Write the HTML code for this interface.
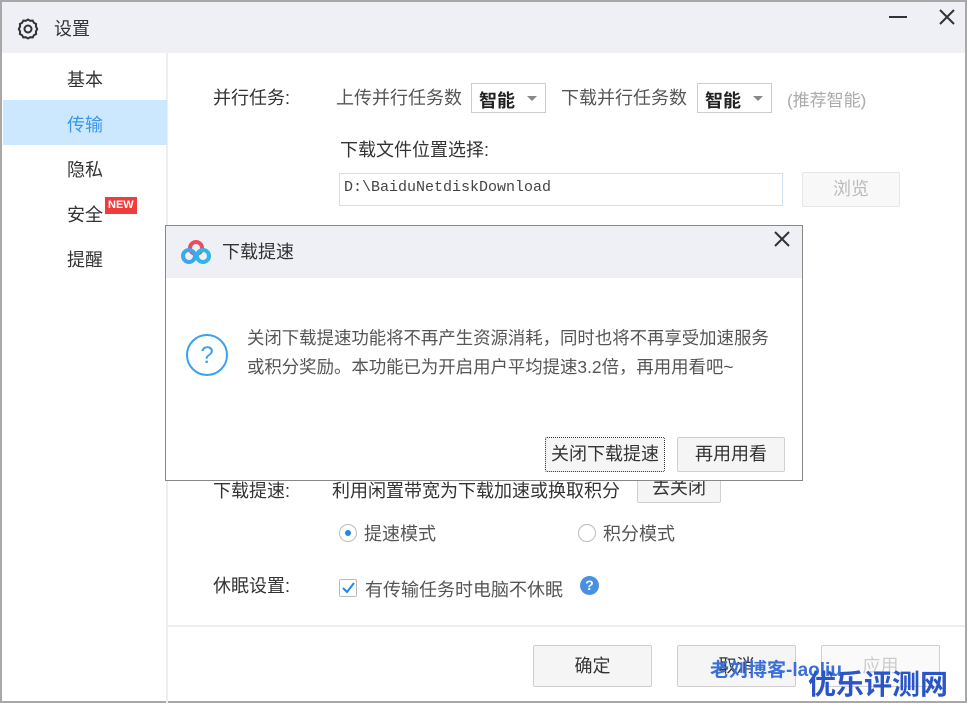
<!DOCTYPE html>
<html><head><meta charset="utf-8"><style>
*{margin:0;padding:0;box-sizing:border-box}
body{width:969px;height:707px;background:#fff;position:relative;overflow:hidden;font-family:"Liberation Sans","Microsoft YaHei","Noto Sans CJK SC",sans-serif;font-size:18px;color:#333}
.a{position:absolute;white-space:nowrap}
.btn{position:absolute;border:1px solid #d0d0d0;background:#f5f5f5;border-radius:2px;text-align:center;color:#333}
</style></head><body>
<div class="a" style="left:0;top:0;width:967px;height:703px;border:2px solid #a8a8a8"></div>
<div class="a" style="left:2px;top:2px;width:963px;height:51px;background:#eef0f5"></div>
<svg class="a" style="left:16px;top:17px" width="24" height="24" viewBox="0 0 24 24"><path d="M12 2.5l2.2 1.3 2.5-.2 1.2 2.2 2.2 1.2-.2 2.5 1.3 2.5-1.3 2.5.2 2.5-2.2 1.2-1.2 2.2-2.5-.2L12 21.5l-2.2-1.3-2.5.2-1.2-2.2-2.2-1.2.2-2.5L2.8 12l1.3-2.5-.2-2.5 2.2-1.2 1.2-2.2 2.5.2z" fill="none" stroke="#333" stroke-width="2"/><circle cx="12" cy="12" r="3.5" fill="none" stroke="#333" stroke-width="2"/></svg>
<div class="a" style="left:54px;top:15px;font-size:18px">设置</div>
<div class="a" style="left:889px;top:16px;width:18px;height:2px;background:#333"></div>
<svg class="a" style="left:937px;top:7px" width="20" height="20"><path d="M3 3L17 17M17 3L3 17" stroke="#333" stroke-width="2"/></svg>
<div class="a" style="left:166px;top:53px;width:2px;height:650px;background:#eee"></div>
<div class="a" style="left:3px;top:100px;width:164px;height:45px;background:#cce8ff"></div>
<div class="a" style="left:67px;top:66px">基本</div>
<div class="a" style="left:67px;top:111px;color:#3a96ee">传输</div>
<div class="a" style="left:67px;top:156px">隐私</div>
<div class="a" style="left:67px;top:201px">安全</div>
<div class="a" style="left:105px;top:197px;background:#f03c3c;color:#fff;font-size:11px;font-weight:bold;padding:1px 3px;line-height:15px">NEW</div>
<div class="a" style="left:67px;top:246px">提醒</div>
<div class="a" style="left:213px;top:84px">并行任务:</div>
<div class="a" style="left:336px;top:84px;color:#555">上传并行任务数</div>
<div class="a" style="left:471px;top:83px;width:75px;height:30px;border:1px solid #ccc;padding:3px 0 0 7px;color:#222;font-weight:bold">智能<span style="position:absolute;left:55px;top:12px;border:5px solid transparent;border-top:5px solid #888"></span></div>
<div class="a" style="left:561px;top:84px;color:#555">下载并行任务数</div>
<div class="a" style="left:697px;top:83px;width:75px;height:30px;border:1px solid #ccc;padding:3px 0 0 7px;color:#222;font-weight:bold">智能<span style="position:absolute;left:55px;top:12px;border:5px solid transparent;border-top:5px solid #888"></span></div>
<div class="a" style="left:787px;top:86px;color:#aaa;font-size:17px">(推荐智能)</div>
<div class="a" style="left:340px;top:136px">下载文件位置选择:</div>
<div class="a" style="left:339px;top:173px;width:444px;height:33px;border:1px solid #cfe0f0;padding:5px 0 0 4px;font-family:'Liberation Mono',monospace;font-size:15px;color:#444">D:\BaiduNetdiskDownload</div>
<div class="btn" style="left:802px;top:172px;width:98px;height:35px;line-height:33px;color:#bbb;background:#f8f8f8;border-color:#e6e6e6">浏览</div>
<div class="a" style="left:213px;top:477px">下载提速:</div>
<div class="a" style="left:332px;top:477px">利用闲置带宽为下载加速或换取积分</div>
<div class="btn" style="left:637px;top:474px;width:84px;height:29px;line-height:27px">去关闭</div>
<div class="a" style="left:339px;top:524px;width:18px;height:18px;border:1px solid #bbb;border-radius:50%"><div style="position:absolute;left:5px;top:5px;width:6px;height:6px;border-radius:50%;background:#1e88e5"></div></div>
<div class="a" style="left:364px;top:520px;color:#555">提速模式</div>
<div class="a" style="left:578px;top:524px;width:18px;height:18px;border:1px solid #bbb;border-radius:50%"></div>
<div class="a" style="left:603px;top:520px;color:#555">积分模式</div>
<div class="a" style="left:213px;top:572px">休眠设置:</div>
<div class="a" style="left:339px;top:579px;width:18px;height:18px;border:1px solid #bbb;border-radius:2px"><svg width="16" height="16" style="position:absolute;left:0;top:0"><path d="M3 8l4 4 7-9" stroke="#1e88e5" stroke-width="2" fill="none"/></svg></div>
<div class="a" style="left:365px;top:576px;color:#555">有传输任务时电脑不休眠</div>
<div class="a" style="left:580px;top:576px;width:19px;height:19px;border-radius:50%;background:#4a90e2;color:#fff;font-size:14px;font-weight:bold;text-align:center;line-height:19px">?</div>
<div class="a" style="left:168px;top:625px;width:797px;height:2px;background:#eee"></div>
<div class="btn" style="left:533px;top:645px;width:119px;height:42px;line-height:40px">确定</div>
<div class="btn" style="left:677px;top:645px;width:119px;height:42px;line-height:40px">取消</div>
<div class="btn" style="left:821px;top:645px;width:119px;height:42px;line-height:40px;color:#ccc;background:#fafafa">应用</div>
<div class="a" style="left:710px;top:655px;color:#3a6fd8;font-weight:bold;font-size:19px">老刘博客-laoliu</div>
<div class="a" style="left:808px;top:663px;color:#2a55c8;font-weight:bold;font-size:28px">优乐评测网</div>
<div class="a" style="left:165px;top:225px;width:638px;height:256px;border:1px solid #888;background:#fff"></div>
<div class="a" style="left:166px;top:226px;width:636px;height:52px;background:#eef0f5"></div>
<svg class="a" style="left:180px;top:239px" width="32" height="26" viewBox="0 0 32 26"><circle cx="16" cy="9" r="6" fill="none" stroke="#ef4b5f" stroke-width="4"/><circle cx="9" cy="17" r="6" fill="none" stroke="#3aa8f0" stroke-width="4"/><circle cx="23" cy="17" r="6" fill="none" stroke="#2fb6e6" stroke-width="4"/></svg>
<div class="a" style="left:222px;top:238px">下载提速</div>
<svg class="a" style="left:773px;top:230px" width="18" height="18"><path d="M2 2L16 16M16 2L2 16" stroke="#333" stroke-width="2"/></svg>
<svg class="a" style="left:185px;top:333px" width="44" height="44"><circle cx="22" cy="22" r="20" fill="none" stroke="#3aa0f0" stroke-width="2"/><text x="22" y="30" text-anchor="middle" font-size="24" fill="#3aa0f0" font-family="Liberation Sans">?</text></svg>
<div class="a" style="left:247px;top:324px;color:#555;font-size:17.4px;line-height:29px">关闭下载提速功能将不再产生资源消耗，同时也将不再享受加速服务<br>或积分奖励。本功能已为开启用户平均提速3.2倍，再用用看吧~</div>
<div class="btn" style="left:545px;top:437px;width:120px;height:35px;line-height:33px;border:1px dotted #333">关闭下载提速</div>
<div class="btn" style="left:677px;top:437px;width:108px;height:35px;line-height:33px">再用用看</div>
</body></html>
